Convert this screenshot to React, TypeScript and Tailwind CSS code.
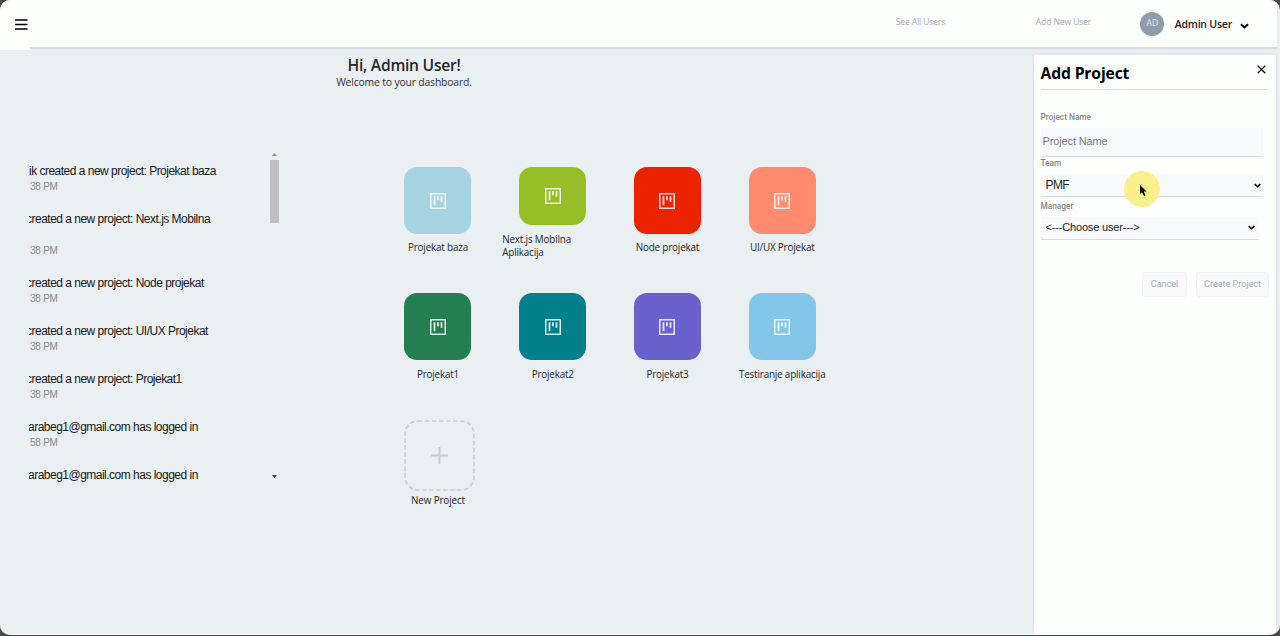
import React from "react";

const segoe = "font-['Open_Sans','Noto_Sans',sans-serif]";
const arial = "font-['Liberation_Sans',Arial,sans-serif]";

type Activity = { text: string; time: string; shift: string; height: string; gap: string };

const activities: Activity[] = [
  { text: "ik created a new project: Projekat baza", time: "38 PM", shift: "", height: "h-12", gap: "" },
  { text: "created a new project: Next.js Mobilna", time: "38 PM", shift: "-ml-[3px]", height: "h-16", gap: "mt-4" },
  { text: "created a new project: Node projekat", time: "38 PM", shift: "-ml-[3px]", height: "h-12", gap: "" },
  { text: "created a new project: UI/UX Projekat", time: "38 PM", shift: "-ml-[3px]", height: "h-12", gap: "" },
  { text: "created a new project: Projekat1", time: "38 PM", shift: "-ml-[3px]", height: "h-12", gap: "" },
  { text: "arabeg1@gmail.com has logged in", time: "58 PM", shift: "-ml-px", height: "h-12", gap: "" },
  { text: "arabeg1@gmail.com has logged in", time: "", shift: "-ml-px", height: "h-8", gap: "" },
];

type Project = { name: string; color: string; tile: string; label: string };

const projects: Project[] = [
  { name: "Projekat baza", color: "bg-[#a6d3e0]", tile: "h-[67px]", label: "mt-[7px] text-center" },
  { name: "Next.js Mobilna Aplikacija", color: "bg-[#97be26]", tile: "h-[58px]", label: "mt-2 w-[101px] pr-4" },
  { name: "Node projekat", color: "bg-[#eb2300]", tile: "h-[67px]", label: "mt-[7px] text-center" },
  { name: "UI/UX Projekat", color: "bg-[#ff8a6d]", tile: "h-[67px]", label: "mt-[7px] text-center" },
  { name: "Projekat1", color: "bg-[#247e51]", tile: "h-[67px]", label: "mt-[7.5px] text-center" },
  { name: "Projekat2", color: "bg-[#01808a]", tile: "h-[67px]", label: "mt-[7.5px] text-center" },
  { name: "Projekat3", color: "bg-[#6a60ce]", tile: "h-[67px]", label: "mt-[7.5px] text-center" },
  { name: "Testiranje aplikacija", color: "bg-[#82c7ea]", tile: "h-[67px]", label: "mt-[7.5px] text-center" },
];

function BoardIcon() {
  return (
    <svg width="16" height="16" viewBox="0 0 16 16" fill="none" stroke="#fff" strokeOpacity="0.85">
      <rect x="0.75" y="0.75" width="14.5" height="14.5" strokeWidth="1.5" />
      <path d="M4.5 3.2v9M8 3.2v4M11.5 3.2v5.5" strokeWidth="1.8" />
    </svg>
  );
}

function Chevron({ className }: { className: string }) {
  return (
    <svg className={className} viewBox="0 0 10 6" fill="none" stroke="#000" strokeWidth="2.1">
      <path d="M1 1l4 3.7L9 1" />
    </svg>
  );
}

function Header() {
  return (
    <header className="flex h-[51px] shrink-0 items-start">
      <div className="flex h-[50px] w-[30px] shrink-0 items-start bg-[#fdfffd] pl-[15px] pt-[19px]">
        <svg width="13" height="12" viewBox="0 0 13 12" stroke="#000" strokeWidth="1.5">
          <path d="M0 1h12.5M0 5.5h12.5M0 10h12.5" />
        </svg>
      </div>
      <div className={`flex h-[49px] w-[1247px] items-center border-b-2 border-[#d8dddf] bg-[#fdfffd] ${segoe}`}>
        <span className="ml-[865.8px] w-[140px] pb-px text-[8.7px] tracking-[-0.2px] whitespace-nowrap text-[#a9abac]">See All Users</span>
        <span className="w-[104.5px] pb-px text-[8.7px] tracking-[-0.2px] whitespace-nowrap text-[#a9abac]">Add New User</span>
        <span className="flex size-6 items-center justify-center rounded-full bg-[#919cab] text-[8.5px] text-[#e4e9ef]">AD</span>
        <span className="ml-[10.4px] w-[65px] pt-0.5 text-[10.6px] font-semibold tracking-[-0.25px] whitespace-nowrap text-[#1e2023]">Admin User</span>
        <Chevron className="mt-1 h-[6px] w-[9px]" />
      </div>
    </header>
  );
}

function ActivityFeed() {
  return (
    <section className={`mt-[98px] ml-[29px] flex h-[334px] w-[251px] shrink-0 ${arial}`}>
      <div className="flex-1 overflow-hidden pt-[14px]">
        {activities.map((a, i) => (
          <div key={i} className={`${a.height} ${a.shift}`}>
            <p className="text-[12px] leading-4 tracking-[-0.51px] whitespace-nowrap text-[#16191b]">{a.text}</p>
            {a.time && (
              <p className={`text-[10px] leading-[15px] tracking-[-0.25px] text-[#84888b] ${a.gap} ${a.shift === "-ml-[3px]" ? "ml-1" : a.shift ? "ml-0.5" : "ml-px"}`}>{a.time}</p>
            )}
          </div>
        ))}
      </div>
      <div className="flex w-[11px] flex-col items-center pt-1 pb-[5px]">
        <svg width="5" height="3" viewBox="0 0 5 3" fill="#8c8f90"><path d="M0 3L2.5 0L5 3z" /></svg>
        <div className="mt-1 h-[63px] w-[9px] bg-[#bcbfc0]" />
        <svg className="mt-auto" width="5" height="3" viewBox="0 0 5 3" fill="#404344"><path d="M0 0L2.5 3L5 0z" /></svg>
      </div>
    </section>
  );
}

function ProjectGrid() {
  return (
    <section className={`grid w-[459px] grid-cols-4 ${segoe}`}>
      {projects.map((p) => (
        <div key={p.name} className="flex h-[126.4px] flex-col items-center">
          <div className={`flex w-[67px] shrink-0 items-center justify-center rounded-[13px] ${p.tile} ${p.color}`}>
            <BoardIcon />
          </div>
          <p className={`text-[9.9px] leading-[13px] tracking-[-0.18px] text-[#24282b] ${p.label}`}>{p.name}</p>
        </div>
      ))}
      <div className="flex flex-col items-center">
        <svg className="ml-[3px] shrink-0" width="71" height="71" viewBox="0 0 71 71" fill="none">
          <rect x="1" y="1" width="69" height="69" rx="13" stroke="#cdd0d3" strokeWidth="1.7" strokeDasharray="4.5 2.5" />
          <path d="M27 35.5h17M35.5 27v17" stroke="#c6c9cb" strokeWidth="1.8" />
        </svg>
        <p className="mt-[3px] text-[9.9px] leading-[13px] tracking-[-0.15px] whitespace-nowrap text-[#24282b]">New Project</p>
      </div>
    </section>
  );
}

function AddProjectPanel() {
  const label = "font-['Roboto',sans-serif] text-[8.3px] leading-[11px] font-medium text-[#858789]";
  const field = `flex items-center justify-between border-b border-[#d8dbdf] bg-[#f8f9fa] ${arial}`;
  const button = `flex h-[25px] items-center justify-center rounded-[3px] border border-[#f0f3f4] bg-[#f7f9fa] text-[9px] text-[#a5adb3] font-['Roboto',sans-serif]`;
  return (
    <aside className="mt-1 ml-auto mr-1 flex w-[242px] shrink-0 flex-col bg-[#fdfffd] pl-[6.5px] shadow-[0_0_3px_#d9dce2]">
      <div className="flex h-[35px] w-[228.5px] justify-between border-b border-[#dcdfe1]">
        <h2 className={`mt-[6px] text-[15.7px] leading-6 font-bold tracking-[-0.15px] text-black ${segoe}`}>Add Project</h2>
        <svg className="mt-[10px] mr-[3px]" width="9" height="9" viewBox="0 0 9 9" stroke="#000" strokeWidth="1.3">
          <path d="M0.7 0.7l7.6 7.6M8.3 0.7L0.7 8.3" />
        </svg>
      </div>
      <label className={`mt-[22px] ${label}`}>Project Name</label>
      <div className={`mt-[5px] h-[29px] w-[222.5px] pb-px pl-[2px] text-[11px] tracking-[-0.13px] text-[#777a7c] ${field}`}>Project Name</div>
      <label className={`mt-px ${label}`}>Team</label>
      <div className={`mt-[5px] h-[23px] w-[222.5px] pr-[2px] pl-[5px] text-[12px] tracking-[-0.6px] text-[#222527] ${field}`}>
        PMF
        <Chevron className="h-[5px] w-[7px]" />
      </div>
      <label className={`mt-1 ${label}`}>Manager</label>
      <div className={`mt-[5px] h-[23px] w-[218px] pr-1 pb-px pl-[5px] text-[11px] tracking-[-0.17px] text-[#222527] ${field}`}>
        {"<---Choose user--->"}
        <Chevron className="h-[5px] w-[7px]" />
      </div>
      <div className="mt-8 flex w-[228.5px] justify-end gap-[9px]">
        <div className={`w-[45px] ${button}`}>Cancel</div>
        <div className={`w-[73px] ${button}`}>Create Project</div>
      </div>
    </aside>
  );
}

export default function App() {
  return (
    <div className="relative h-[636px] w-[1280px] overflow-hidden bg-[#484a4a]">
      <div className="flex h-[635px] w-full flex-col overflow-hidden rounded-[10px] border-b border-[#f8fafb] bg-[#eaeff2]">
        <Header />
        <main className="flex min-h-0 flex-1">
          <ActivityFeed />
          <div className="ml-[27px] w-[540px] shrink-0">
            <div className={`w-[194px] pt-1 text-center ${segoe}`}>
              <h1 className="text-[15.6px] leading-5 font-semibold tracking-[-0.25px] whitespace-nowrap text-[#24272a]">Hi, Admin User!</h1>
              <p className="text-[10.4px] leading-[15px] tracking-[-0.17px] whitespace-nowrap text-[#303438]">Welcome to your dashboard.</p>
            </div>
            <div className="mt-[77px] ml-[73.6px]">
              <ProjectGrid />
            </div>
          </div>
          <AddProjectPanel />
        </main>
      </div>
      <div className="absolute top-[171px] left-[1124px] size-9 rounded-full bg-[#faf08c]">
        <svg className="absolute top-[14px] left-[16px]" width="7" height="11" viewBox="0 0 7 11" fill="#000">
          <path d="M0 0v9l2-1.8L4 11l1.4-.6L3.8 6.6H6.6z" />
        </svg>
      </div>
    </div>
  );
}
